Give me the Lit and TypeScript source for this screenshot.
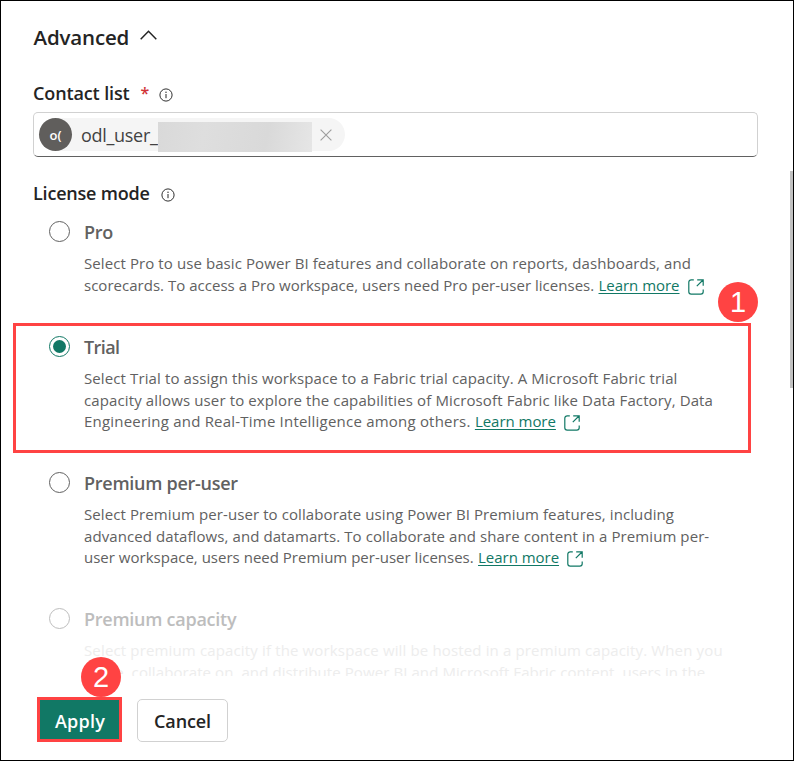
import { LitElement, html, css, svg } from "lit";
import { customElement } from "lit/decorators.js";
import { classMap } from "lit/directives/class-map.js";
import { styleMap } from "lit/directives/style-map.js";

interface Line { text: string; spacing: number; link?: boolean; }
interface Mode { title: Line; lines: Line[]; checked?: boolean; disabled?: boolean; }

const line = (text: string, spacing = 0, link = false): Line => ({ text, spacing, link });

const MODES: Mode[] = [
  { title: line("Pro", -0.27), lines: [
    line("Select Pro to use basic Power BI features and collaborate on reports, dashboards, and", 0.09),
    line("scorecards. To access a Pro workspace, users need Pro per-user licenses.", 0.02, true)] },
  { title: line("Trial", -0.6), checked: true, lines: [
    line("Select Trial to assign this workspace to a Fabric trial capacity. A Microsoft Fabric trial", 0.112),
    line("capacity allows user to explore the capabilities of Microsoft Fabric like Data Factory, Data", 0.12),
    line("Engineering and Real-Time Intelligence among others.", 0.21, true)] },
  { title: line("Premium per-user", -0.27), lines: [
    line("Select Premium per-user to collaborate using Power BI Premium features, including", 0.095),
    line("advanced dataflows, and datamarts. To collaborate and share content in a Premium per-", 0.083),
    line("user workspace, users need Premium per-user licenses.", 0.01, true)] },
  { title: line("Premium capacity", -0.26), disabled: true, lines: [
    line("Select premium capacity if the workspace will be hosted in a premium capacity. When you", 0.147),
    line("share, collaborate on, and distribute Power BI and Microsoft Fabric content, users in the", 0.086)] },
];

const infoIcon = html`<svg class="info" width="14" height="14" viewBox="0 0 14 14">${svg`<circle cx="7" cy="7" r="6.1" fill="none" stroke="#242424" stroke-width=".95"/><path d="M7 6v4.2" stroke="#242424" stroke-width="1"/><circle cx="7" cy="4.2" r=".7" fill="#242424"/>`}</svg>`;
const openIcon = html`<svg class="open" width="16" height="16" viewBox="0 0 16 16">${svg`<path d="M5.8.8H3.2A2.4 2.4 0 0 0 .8 3.2v9.6a2.4 2.4 0 0 0 2.4 2.4h9.6a2.4 2.4 0 0 0 2.4-2.4v-2.4M9.2.8h6v6M15 1L8.8 7.2" fill="none" stroke="#117865" stroke-width="1.2"/>`}</svg>`;

@customElement("app-root")
export class AppRoot extends LitElement {
  static styles = css`
    :host { display: block; font-family: "Open Sans", "Noto Sans", sans-serif; color: #242424; }
    * { box-sizing: border-box; }
    .dialog { position: relative; width: 794px; height: 761px; border: 1px solid #000; background: #fff; overflow: hidden; display: flex; flex-direction: column; }
    .t { white-space: pre; }
    .content { height: 675px; overflow: hidden; padding: 20px 35px 0 32px; flex: none; }
    .heading { display: flex; align-items: center; height: 32px; font-size: 20.5px; font-weight: 600; padding-left: 0.5px; gap: 11px; }
    .chevron { margin-top: -4px; }
    .label { display: flex; align-items: center; height: 24px; font-size: 18px; font-weight: 600; }
    .contact { margin-top: 28px; }
    .star { color: #d13438; margin-left: 11px; width: 8px; font-size: 16px; }
    .info { margin-left: 10px; margin-top: 3px; flex: none; }
    .license .info { margin-left: 11px; }
    .license { margin-top: 24px; }
    .field { margin-top: 7px; width: 725px; height: 45px; border: 1px solid #d1d1d1; border-bottom-color: #616161; border-radius: 5px; padding: 5px; }
    .pill { display: flex; align-items: center; width: 306px; height: 33px; border-radius: 17px; background: #f5f5f5; font-size: 18px; color: #424242; }
    .avatar { width: 33px; height: 33px; border-radius: 50%; background: #605e5c; color: #fff; font-size: 13px; font-weight: 600; display: grid; place-items: center; margin-right: 9px; flex: none; }
    .name { width: 77px; }
    .mask { width: 154px; height: 30px; margin-top: 4px; background: linear-gradient(100deg, #d9d9d9, #dedede 30%, #d9d9d9 70%, #e6e6e6); flex: none; }
    .close { margin-left: 8px; }
    .modes { padding-top: 16px; display: grid; grid-template-rows: 115px 136px 136px auto; }
    .mode { display: grid; grid-template-columns: 35px 1fr; padding-left: 16px; }
    .radio { width: 21px; height: 21px; border: 1.4px solid #616161; border-radius: 50%; display: grid; place-items: center; }
    .checked .radio { border-color: #117865; }
    .checked .radio::after { content: ""; width: 13px; height: 13px; border-radius: 50%; background: #117865; }
    .disabled .radio { border-color: #bdbdbd; }
    .title { font-size: 18px; font-weight: 600; line-height: 22px; height: 32px; color: #616161; }
    .disabled .title { color: #bdbdbd; }
    .line { height: 21.5px; line-height: 21.5px; font-size: 15px; color: #616161; white-space: pre; display: flex; }
    .disabled .line { color: #ededed; }
    .link { color: #117865; text-decoration: underline; text-underline-offset: 2px; text-decoration-thickness: 1px; margin-left: 4.3px; }
    .open { margin: 4px 0 0 8.4px; }
    .footer { display: flex; padding: 21px 0 0 36px; gap: 15px; }
    .btn { font: 600 18px "Open Sans", sans-serif; padding: 0; margin: 0; display: grid; place-items: center; }
    .apply { width: 85px; height: 45px; padding: 2px 0 0 1px; background: #117865; color: #fff; border: 3px solid #ff4343; }
    .cancel { width: 91px; height: 43px; margin-top: 2px; border: 1px solid #d1d1d1; border-radius: 5px; background: #fff; color: #242424; }
    .outline { position: absolute; left: 12px; top: 322px; width: 738px; height: 130px; border: 3px solid #ff4343; }
    .badge { position: absolute; width: 40px; height: 40px; border-radius: 50%; background: #ff4343; color: #fff; font-size: 29px; line-height: 40px; text-align: center; font-family: "Liberation Sans", sans-serif; }
    .one { left: 717px; top: 281px; }
    .two { left: 80px; top: 656px; }
    .thumb { position: absolute; left: 789px; top: 170px; width: 3px; height: 217px; background: #c1c1c1; }
  `;
  text(l: Line) {
    return html`<span class="t" style=${styleMap({ letterSpacing: `${l.spacing}px` })}>${l.text}</span>`;
  }
  render() {
    return html`<div class="dialog">
      <div class="content">
        <div class="heading">${this.text(line("Advanced", -0.16))}
          <svg class="chevron" width="17" height="10" viewBox="0 0 17 10"><path d="M.7 9.2L8.5 1.2l7.8 8" fill="none" stroke="#242424" stroke-width="1.5"/></svg></div>
        <div class="label contact">${this.text(line("Contact list", -0.12))}<span class="star">*</span>${infoIcon}</div>
        <div class="field"><div class="pill"><span class="avatar">o(</span><span class="name">${this.text(line("odl_user_", -0.3))}</span><span class="mask"></span>
          <svg class="close" width="12" height="12" viewBox="0 0 12 12"><path d="M.6.6l10.8 10.8M11.4.6L.6 11.4" stroke="#9e9e9e" stroke-width="1.1"/></svg></div></div>
        <div class="label license">${this.text(line("License mode", -0.2))}${infoIcon}</div>
        <div class="modes">${MODES.map((m) => html`<div class=${classMap({ mode: true, checked: !!m.checked, disabled: !!m.disabled })}>
          <span class="radio"></span>
          <div><div class="title">${this.text(m.title)}</div>
          ${m.lines.map((l) => html`<div class="line">${this.text(l)}${l.link ? html`<span class="link">${this.text(line("Learn more", -0.028))}</span>${openIcon}` : ""}</div>`)}
          </div></div>`)}</div>
      </div>
      <div class="footer"><button class="btn apply">${this.text(line("Apply", 0.25))}</button><button class="btn cancel">${this.text(line("Cancel", -0.1))}</button></div>
      <div class="outline"></div><div class="badge one">1</div><div class="badge two">2</div><div class="thumb"></div>
    </div>`;
  }
}
